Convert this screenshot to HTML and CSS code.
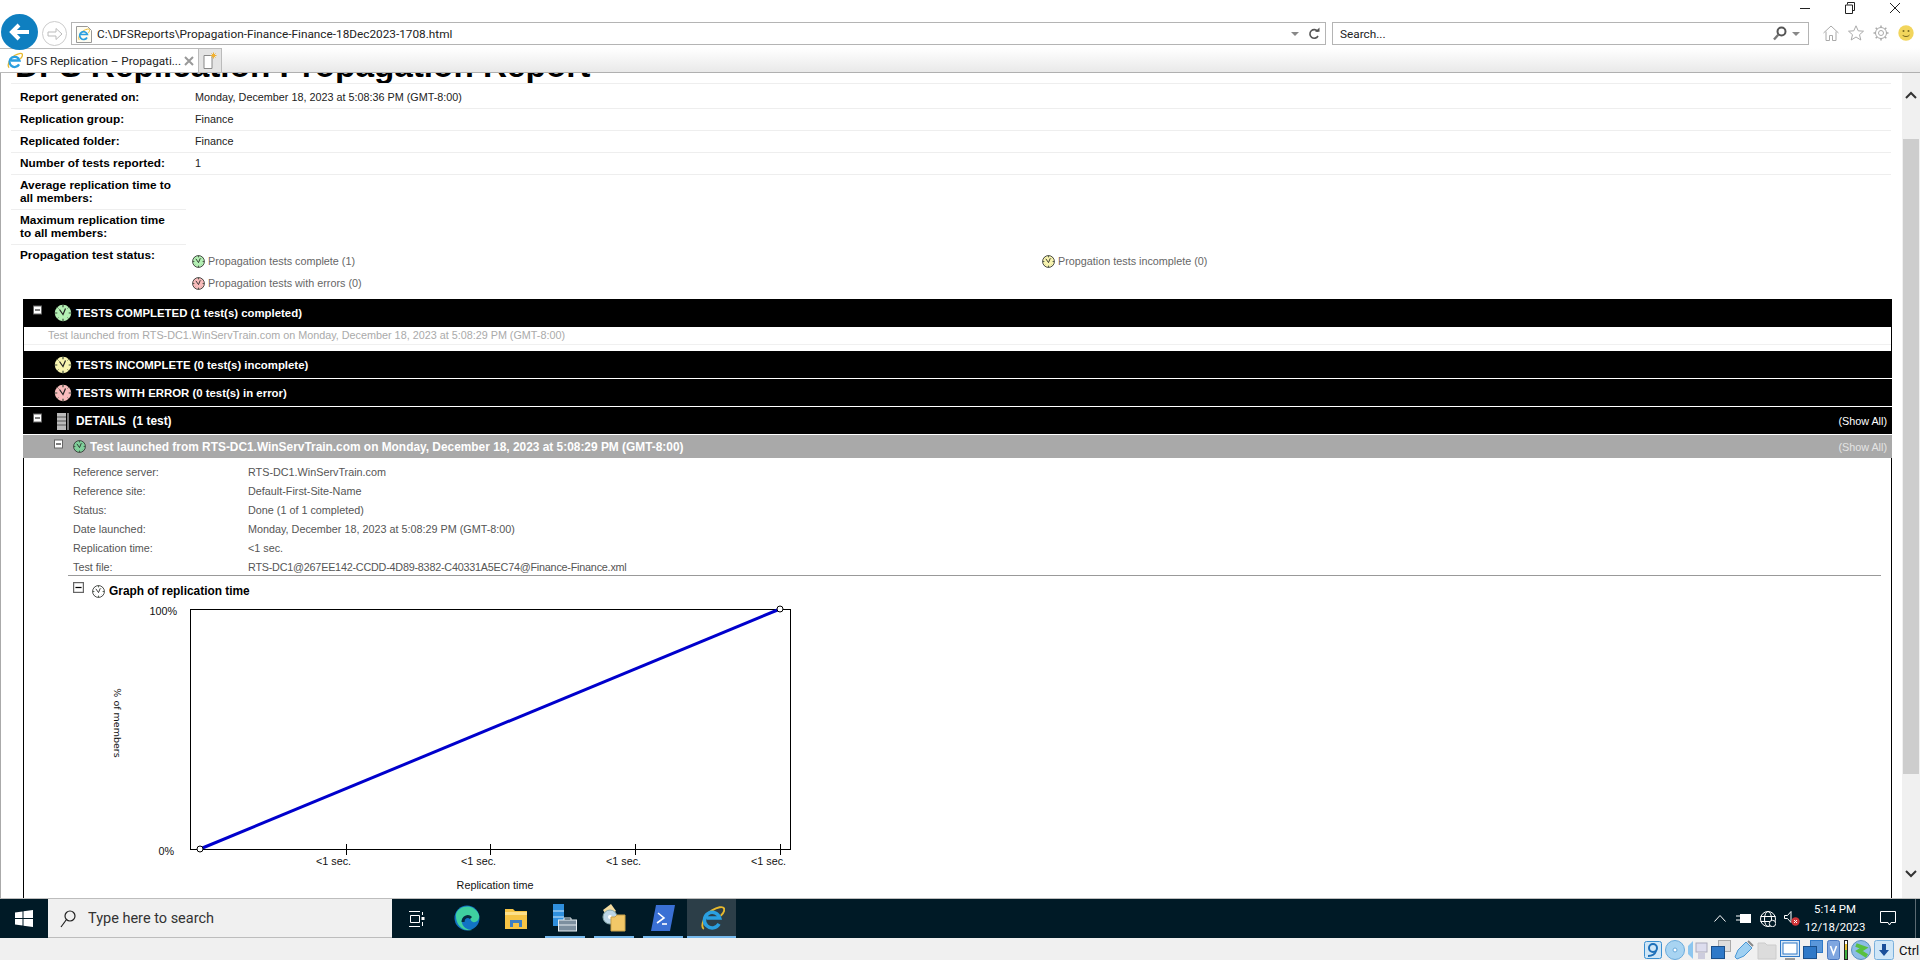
FILE: index.html
```html
<!DOCTYPE html>
<html lang="en">
<head>
    <meta charset="UTF-8">
    <title>DFS Replication - Propagation Report</title>
    <link rel="stylesheet" href="styles.css">
</head>
<body>
    <svg class="defs" aria-hidden="true">
        <symbol id="clock" viewBox="0 0 18 18">
            <circle class="face" cx="9" cy="9" r="8.200" fill="currentColor"/>
            <path d="M9 .8v2.500M9 14.700v2.500M.8 9h2.500M14.700 9h2.500" stroke="#3a4a3a" stroke-width="1.200"/>
            <path d="M3.200 3.200l1.300 1.300M14.800 3.200l-1.300 1.300M3.200 14.800l1.300-1.300M14.800 14.800l-1.300-1.300" stroke="#3a4a3a" stroke-width=".8"/>
            <path d="M5.500 5.500L9 10.500L11.500 4.500" fill="none" stroke="#222" stroke-width="1.200"/>
        </symbol>
        <symbol id="ie" viewBox="0 0 24 24">
            <path d="M4.500 22C1 20 5 9 12 5c5-3 10-4 11-2 1 2-1 5-3 7" fill="none" stroke="#e8b92e" stroke-width="1.800"/>
            <path d="M18.500 17.500a7.200 7.200 0 1 1 .6-5.500H7" fill="none" stroke="#2a9fe0" stroke-width="3.200"/>
        </symbol>
        <symbol id="minus-box" viewBox="0 0 9 9">
            <rect x=".5" y=".5" width="8" height="8" fill="#fff" stroke="#666"/>
            <path d="M2 4.500h5" stroke="#000"/>
        </symbol>
    </svg>

    <div class="titlebar">
        <svg class="win-btn" width="12" height="12" viewBox="0 0 12 12"><path d="M1 6.500h10" stroke="#222"/></svg>
        <svg class="win-btn" width="12" height="12" viewBox="0 0 12 12"><path d="M3.500 2.500V.5h7v8h-2M1.500 3h7v8.500h-7z" fill="none" stroke="#222"/></svg>
        <svg class="win-btn" width="12" height="12" viewBox="0 0 12 12"><path d="M1 1l10 10M11 1L1 11" stroke="#222"/></svg>
    </div>

    <div class="navbar">
        <div class="back-btn">
            <svg width="24" height="20" viewBox="0 0 24 20"><path d="M21 10H5M11 3l-7 7 7 7" fill="none" stroke="#fff" stroke-width="4"/></svg>
        </div>
        <div class="forward-btn">
            <svg width="16" height="14" viewBox="0 0 16 14"><path d="M1 5h8V1.500L15 7l-6 5.500V9H1z" fill="none" stroke="#bbb"/></svg>
        </div>
        <div class="address-box">
            <svg class="page-icon" width="16" height="18" viewBox="0 0 16 18">
                <path d="M.5 1.500h11l4 4v12H.5z" fill="#fffdf2" stroke="#999"/>
                <use href="#ie" x="1" y="3" width="13" height="13"/>
            </svg>
            <span class="address-text">C:\DFSReports\Propagation-Finance-Finance-18Dec2023-1708.html</span>
            <span class="drop-arrow"></span>
            <svg class="refresh" width="12" height="13" viewBox="0 0 12 13"><path d="M9.800 4.500A4.300 4.300 0 1 0 10 9" fill="none" stroke="#555" stroke-width="1.600"/><path d="M7 4.800h4.500V.5z" fill="#555"/></svg>
        </div>
        <div class="search-box">
            <span class="search-text">Search...</span>
            <svg class="search-icon" width="14" height="15" viewBox="0 0 14 15"><circle cx="8.500" cy="5.500" r="4" fill="none" stroke="#555" stroke-width="2"/><path d="M5.500 8.500L1 13.500" stroke="#777" stroke-width="2.400"/></svg>
            <span class="drop-arrow"></span>
        </div>
        <div class="tool-icons">
            <svg width="16" height="16" viewBox="0 0 16 16"><path d="M.5 8L8 1l7.500 7M3 6.500v9h3.500v-5h3v5H13v-9" fill="none" stroke="#aaa"/></svg>
            <svg width="16" height="16" viewBox="0 0 16 16"><path d="M8 .8l2.200 5 5.300.4-4 3.500 1.300 5.300L8 12l-4.800 3 1.300-5.300-4-3.500 5.300-.4z" fill="none" stroke="#aaa"/></svg>
            <svg width="16" height="16" viewBox="0 0 16 16"><circle cx="8" cy="8" r="2.500" fill="none" stroke="#aaa"/><circle cx="8" cy="8" r="5.500" fill="none" stroke="#aaa"/><path d="M8 .5v2.500M8 13v2.500M.5 8H3M13 8h2.500M2.700 2.700l1.500 1.500M11.800 11.800l1.500 1.500M2.700 13.300l1.500-1.500M11.800 4.200l1.500-1.500" stroke="#aaa" stroke-width="1.500"/></svg>
            <svg width="16" height="16" viewBox="0 0 16 16"><circle cx="8" cy="8" r="7.700" fill="#f2d55c"/><circle cx="5.500" cy="6" r="1" fill="#7a6a20"/><circle cx="10.500" cy="6" r="1" fill="#7a6a20"/><path d="M4.500 10c1.500 2 5.500 2 7 0" fill="none" stroke="#7a6a20"/></svg>
        </div>
    </div>

    <div class="tabstrip">
        <div class="tab">
            <svg width="17" height="17"><use href="#ie"/></svg>
            <span class="tab-title">DFS Replication – Propagati...</span>
            <svg width="10" height="10" viewBox="0 0 10 10"><path d="M1 1l8 8M9 1L1 9" stroke="#999" stroke-width="2"/></svg>
        </div>
        <div class="new-tab">
            <svg width="14" height="17" viewBox="0 0 14 17"><path d="M1 3.500h8v13H1z" fill="#fff" stroke="#888"/><path d="M10.500 .5v6M7.500 3.500h6M8.500 1.500l4 4M12.500 1.500l-4 4" stroke="#f0b030"/></svg>
        </div>
    </div>

    <div class="main">
        <div class="page">
            <h1>DFS Replication Propagation Report</h1>

            <table class="info">
                <tr class="first">
                    <th>Report generated on:</th>
                    <td class="ruled">Monday, December 18, 2023 at 5:08:36 PM (GMT-8:00)</td>
                </tr>
                <tr><th>Replication group:</th><td class="ruled">Finance</td></tr>
                <tr><th>Replicated folder:</th><td class="ruled">Finance</td></tr>
                <tr><th>Number of tests reported:</th><td class="ruled">1</td></tr>
                <tr><th>Average replication time to<br>all members:</th><td></td></tr>
                <tr><th>Maximum replication time<br>to all members:</th><td></td></tr>
                <tr class="last">
                    <th>Propagation test status:</th>
                    <td>
                        <div class="status-grid">
                            <div class="status"><svg class="clock-sm green"><use href="#clock"/></svg>Propagation tests complete (1)</div>
                            <div class="status"><svg class="clock-sm yellow"><use href="#clock"/></svg>Propgation tests incomplete (0)</div>
                            <div class="status"><svg class="clock-sm red"><use href="#clock"/></svg>Propagation tests with errors (0)</div>
                        </div>
                    </td>
                </tr>
            </table>

            <div class="report">
                <div class="bar bar-tall">
                    <svg class="toggle"><use href="#minus-box"/></svg>
                    <svg class="clock green"><use href="#clock"/></svg>
                    <span>TESTS COMPLETED (1 test(s) completed)</span>
                </div>
                <div class="test-list">
                    <div class="test-item">Test launched from RTS-DC1.WinServTrain.com on Monday, December 18, 2023 at 5:08:29 PM (GMT-8:00)</div>
                </div>
                <div class="bar">
                    <span class="toggle-gap"></span>
                    <svg class="clock yellow"><use href="#clock"/></svg>
                    <span>TESTS INCOMPLETE (0 test(s) incomplete)</span>
                </div>
                <div class="bar">
                    <span class="toggle-gap"></span>
                    <svg class="clock red"><use href="#clock"/></svg>
                    <span>TESTS WITH ERROR (0 test(s) in error)</span>
                </div>
                <div class="bar">
                    <svg class="toggle"><use href="#minus-box"/></svg>
                    <svg class="clock" viewBox="0 0 18 18"><path d="M3 1h9v17H3z" fill="#bbb"/><path d="M3 5h9M3 9h9M3 13h9" stroke="#555"/><path d="M13 1h2v17h-2z" fill="#777"/></svg>
                    <span class="details-title">DETAILS&nbsp; (1 test)</span>
                    <span class="show-all">(Show All)</span>
                </div>
                <div class="details">
                    <div class="bar-gray">
                        <svg class="toggle-sm"><use href="#minus-box"/></svg>
                        <svg class="clock-sm green-dark"><use href="#clock"/></svg>
                        <span>Test launched from RTS-DC1.WinServTrain.com on Monday, December 18, 2023 at 5:08:29 PM (GMT-8:00)</span>
                        <span class="show-all dim">(Show All)</span>
                    </div>
                    <div class="props">
                        <div class="prop"><span class="prop-name">Reference server:</span>RTS-DC1.WinServTrain.com</div>
                        <div class="prop"><span class="prop-name">Reference site:</span>Default-First-Site-Name</div>
                        <div class="prop"><span class="prop-name">Status:</span>Done (1 of 1 completed)</div>
                        <div class="prop"><span class="prop-name">Date launched:</span>Monday, December 18, 2023 at 5:08:29 PM (GMT-8:00)</div>
                        <div class="prop"><span class="prop-name">Replication time:</span>&lt;1 sec.</div>
                        <div class="prop"><span class="prop-name">Test file:</span><span class="tight">RTS-DC1@267EE142-CCDD-4D89-8382-C40331A5EC74@Finance-Finance.xml</span></div>
                    </div>
                    <div class="graph-head">
                        <svg class="toggle-graph"><use href="#minus-box"/></svg>
                        <svg class="clock-sm white"><use href="#clock"/></svg>
                        <span>Graph of replication time</span>
                    </div>
                    <svg class="chart" width="720" height="298" viewBox="0 0 720 298">
                        <rect x="90.500" y="9.500" width="600" height="240" fill="#fff" stroke="#000"/>
                        <path d="M246.500 244v11M390.500 244v11M535.500 244v11M680.500 244v11" stroke="#000"/>
                        <path d="M100 249L680 9" stroke="#0000cc" stroke-width="3"/>
                        <circle cx="100" cy="249" r="3" fill="#fff" stroke="#000"/>
                        <circle cx="680" cy="9" r="3" fill="#fff" stroke="#000"/>
                        <text class="axis" x="77" y="15" text-anchor="end">100%</text>
                        <text class="axis" x="74" y="255" text-anchor="end">0%</text>
                        <text class="axis" x="233.500" y="265" text-anchor="middle">&lt;1 sec.</text>
                        <text class="axis" x="378.500" y="265" text-anchor="middle">&lt;1 sec.</text>
                        <text class="axis" x="523.500" y="265" text-anchor="middle">&lt;1 sec.</text>
                        <text class="axis" x="668.500" y="265" text-anchor="middle">&lt;1 sec.</text>
                        <text class="axis" x="395" y="289" text-anchor="middle">Replication time</text>
                        <text class="axis-v" transform="translate(14 123) rotate(90)" text-anchor="middle">% of members</text>
                    </svg>
                </div>
            </div>
        </div>

        <div class="scrollbar">
            <div class="scroll-btn"><svg width="12" height="8" viewBox="0 0 12 8"><path d="M1 7l5-5 5 5" fill="none" stroke="#333" stroke-width="2"/></svg></div>
            <div class="scroll-thumb"></div>
            <div class="scroll-track"></div>
            <div class="scroll-btn-end"><svg width="12" height="8" viewBox="0 0 12 8"><path d="M1 1l5 5 5-5" fill="none" stroke="#333" stroke-width="2"/></svg></div>
        </div>
    </div>

    <div class="taskbar">
        <div class="start">
            <svg width="18" height="17" viewBox="0 0 18 17"><path d="M0 2.500l7.500-1.100v6.600H0zM8.500 1.200L18 0v8H8.500zM0 9h7.500v6.600L0 14.500zM8.500 9H18v8l-9.500-1.200z" fill="#fff"/></svg>
        </div>
        <div class="task-search">
            <svg width="16" height="18" viewBox="0 0 16 18"><circle cx="10" cy="6" r="5" fill="none" stroke="#222" stroke-width="1.200"/><path d="M6.500 9.500L1 17" stroke="#222" stroke-width="1.200"/></svg>
            <span>Type here to search</span>
        </div>
        <div class="task-view">
            <svg width="16" height="16" viewBox="0 0 16 16"><path d="M0 .5h11M0 15.500h11M1.500 4.500h9v7h-9zM13.500 1v3M13.500 11v4" fill="none" stroke="#fff"/><rect x="12.500" y="6" width="3" height="3" fill="#fff"/></svg>
        </div>
        <div class="task-item">
            <svg width="26" height="26" viewBox="0 0 26 26">
                <circle cx="13" cy="13" r="12.500" fill="#1273c4"/>
                <path d="M2 9C5 0 20-2 25 10c1 5-3 8-6 7-3-1-2-4-4-5-4-2-8 1-7 6 1 4 5 7 10 7-9 2-17-5-16-16z" fill="#3fd0a0"/>
                <path d="M9 17c0-5 5-7 8-4" fill="none" stroke="#062a40" stroke-width="3"/>
            </svg>
        </div>
        <div class="task-item">
            <svg width="22" height="22" viewBox="0 0 22 22"><path d="M0 2h8l2 2h12v18H0z" fill="#f6c445"/><path d="M0 5h22v3H0z" fill="#fde08a"/><path d="M5 20v-7h12v7h-3v-4H8v4z" fill="#3d7fc4"/></svg>
        </div>
        <div class="task-item running">
            <svg width="24" height="28" viewBox="0 0 24 28"><path d="M0 0h11v22H0z" fill="#2f8fdc"/><path d="M0 7h11M0 13h11" stroke="#cfe8fb"/><rect x="5.500" y="16" width="18" height="11" fill="#7c8f9f" stroke="#e6edf2"/><path d="M11 16v-2h7v2M6 21h17" fill="none" stroke="#e6edf2"/></svg>
        </div>
        <div class="task-item running">
            <svg width="25" height="28" viewBox="0 0 25 28"><path d="M2 6l8-6 5 7-8 7z" fill="#f4dca0"/><circle cx="9" cy="13" r="7" fill="#bcd6e6" stroke="#8aa"/><circle cx="9" cy="13" r="2" fill="#fff"/><path d="M10 13h4l2-2h8v16H10z" fill="#f2c868" stroke="#c9a24a"/></svg>
        </div>
        <div class="task-item running">
            <svg width="24" height="26" viewBox="0 0 24 26"><path d="M5 0h19l-5 26H0z" fill="#3a70d4"/><path d="M7 8l6 5-7 5" fill="none" stroke="#fff" stroke-width="1.600"/><path d="M11 19h5" stroke="#fff" stroke-width="1.600"/></svg>
        </div>
        <div class="task-item running active">
            <svg width="26" height="26"><use href="#ie"/></svg>
        </div>
        <div class="tray">
            <svg width="12" height="7" viewBox="0 0 12 7"><path d="M.5 6.500l5.500-6 5.500 6" fill="none" stroke="#fff"/></svg>
            <svg width="16" height="11" viewBox="0 0 16 11"><rect x="4.500" y="1.500" width="10" height="8" fill="#fff" stroke="#fff"/><path d="M0 3h4M0 7h4" stroke="#fff"/></svg>
            <svg width="16" height="16" viewBox="0 0 16 16"><circle cx="8" cy="8" r="7.500" fill="none" stroke="#fff"/><ellipse cx="8" cy="8" rx="3.500" ry="7.500" fill="none" stroke="#fff"/><path d="M.5 5.500h15M.5 10.500h15" stroke="#fff"/><circle cx="12.500" cy="12.500" r="3.200" fill="#001a26" stroke="#fff"/></svg>
            <svg width="16" height="15" viewBox="0 0 16 15"><path d="M.5 4.500h3l3.500-4v11l-3.500-4h-3z" fill="none" stroke="#fff"/><circle cx="11.500" cy="10.500" r="4.200" fill="#d13438"/><path d="M10 9l3 3M13 9l-3 3" stroke="#fff"/></svg>
            <div class="clock-text"><span>5:14 PM</span><span>12/18/2023</span></div>
            <svg class="notify" width="16" height="15" viewBox="0 0 16 15"><path d="M.5.500h15v11h-4.500l-1.500 2.500-1.500-2.500H.5z" fill="none" stroke="#fff"/></svg>
            <div class="show-desktop"></div>
        </div>
    </div>

    <div class="vbox-bar">
        <svg width="18" height="18" viewBox="0 0 18 18"><rect x=".5" y=".5" width="17" height="17" rx="2" fill="#cfe6f7" stroke="#3a8fd0"/><circle cx="9" cy="7" r="4" fill="none" stroke="#1d6fb8" stroke-width="2"/><path d="M4 15c4 0 7-2 8-5" fill="none" stroke="#1d6fb8" stroke-width="2"/></svg>
        <svg width="20" height="20" viewBox="0 0 20 20"><circle cx="10" cy="10" r="9.500" fill="#a8d4f2" stroke="#6aaadb"/><circle cx="10" cy="10" r="2" fill="#fff" stroke="#6aaadb"/></svg>
        <svg width="20" height="20" viewBox="0 0 20 20"><path d="M0 6l5-5v18l-5-5z" fill="#8cc6ef"/><rect x="8" y="3" width="11" height="9" fill="#dde" stroke="#aab"/><rect x="10" y="13" width="7" height="6" fill="#ccd"/></svg>
        <svg width="20" height="20" viewBox="0 0 20 20"><rect x="7.500" y=".5" width="12" height="11" fill="#ddd" stroke="#aaa"/><rect x=".5" y="6.500" width="13" height="12" fill="#2f79c8" stroke="#1a4f8a"/></svg>
        <svg width="20" height="20" viewBox="0 0 20 20"><path d="M1 17l3-7 8-8 6 6-8 8-7 3z" fill="#9ed0f2" stroke="#4a97d4"/><path d="M14 1l5 5" stroke="#888" stroke-width="2"/></svg>
        <svg width="20" height="20" viewBox="0 0 20 20"><path d="M1 3h7l2 2h9v14H1z" fill="#dcdcdc" stroke="#ccc"/></svg>
        <svg width="20" height="20" viewBox="0 0 20 20"><rect x=".5" y=".5" width="19" height="16" fill="#dbe9f6" stroke="#2f79c8"/><rect x="3" y="3" width="14" height="11" fill="#fff" stroke="#2f79c8"/><path d="M5 19h10" stroke="#999" stroke-width="2"/></svg>
        <svg width="20" height="20" viewBox="0 0 20 20"><rect x="7.500" y=".5" width="12" height="12" fill="#5a97da" stroke="#2f79c8"/><rect x=".5" y="6.500" width="13" height="12" fill="#2f79c8" stroke="#1a4f8a"/></svg>
        <svg class="chip" width="15" height="20" viewBox="0 0 15 20"><rect x="1.500" y=".5" width="12" height="19" rx="2" fill="#7fa6e0" stroke="#4a78c0"/><path d="M4.500 6l3 8 3-8" fill="none" stroke="#fff" stroke-width="1.600"/></svg>
        <svg class="meter" width="4" height="20" viewBox="0 0 4 20"><rect x=".5" y=".5" width="3" height="19" fill="#fff" stroke="#222"/><path d="M2 4v6" stroke="#e8c030" stroke-width="2"/><path d="M2 10v9" stroke="#40b040" stroke-width="2"/></svg>
        <svg width="20" height="20" viewBox="0 0 20 20"><circle cx="10" cy="10" r="9.500" fill="#8dbde6" stroke="#5a8fc0"/><path d="M5 5l8 3-5 3 8 5" fill="none" stroke="#58c040" stroke-width="4"/></svg>
        <svg width="20" height="20" viewBox="0 0 20 20"><rect x=".5" y=".5" width="19" height="19" rx="2" fill="#cfe6f7" stroke="#7ab0dc"/><path d="M8 4h4v6h3l-5 6-5-6h3z" fill="#1a4f9a"/></svg>
        <span class="ctrl">Ctrl</span>
    </div>
</body>
</html>
```

FILE: styles.css
```css
* {
    box-sizing: border-box;
}
html, body {
    margin: 0;
    height: 100%;
}
body {
    width: 1920px;
    height: 960px;
    overflow: hidden;
    display: flex;
    flex-direction: column;
    background: #fff;
    font-family: Roboto, "Noto Sans", sans-serif;
}
.defs {
    position: absolute;
    width: 0;
    height: 0;
}

/* window chrome */
.titlebar {
    height: 20px;
    display: flex;
    justify-content: flex-end;
    align-items: flex-start;
    gap: 33px;
    padding: 2px 19px 0 0;
}
.navbar {
    height: 28px;
    display: flex;
    align-items: flex-start;
    padding: 2px 0 0 1px;
}
.back-btn {
    width: 37px;
    height: 36px;
    margin-top: -8px;
    border-radius: 50%;
    background: #0f7fc0;
    display: flex;
    align-items: center;
    justify-content: center;
    position: relative;
}
.forward-btn {
    width: 25px;
    height: 25px;
    margin: -1px 0 0 4px;
    border: 1px solid #ccc;
    border-radius: 50%;
    display: flex;
    align-items: center;
    justify-content: center;
}
.address-box, .search-box {
    height: 23px;
    border: 1px solid #b4b4b4;
    display: flex;
    align-items: center;
    font-size: 11.800px;
    color: #222;
    background: #fff;
}
.address-box {
    width: 1255px;
    margin-left: 4px;
    padding: 0 5px 0 4px;
}
.address-text {
    margin-left: 5px;
    flex: 1;
}
.drop-arrow {
    width: 0;
    height: 0;
    border: 4px solid transparent;
    border-top: 4px solid #888;
    border-bottom: 0;
}
.refresh {
    margin-left: 9px;
}
.search-box {
    width: 477px;
    margin-left: 6px;
    padding: 0 8px 0 7px;
}
.search-text {
    flex: 1;
}
.search-icon {
    margin-right: 5px;
}
.tool-icons {
    display: flex;
    gap: 9px;
    margin-left: 14px;
    margin-top: 3px;
}
.tabstrip {
    height: 25px;
    display: flex;
    border-bottom: 1px solid #b0b0b0;
    background: linear-gradient(#fff, #e9e9e9);
}
.tab {
    width: 199px;
    height: 25px;
    display: flex;
    align-items: center;
    padding: 0 4px 0 6px;
    background: #fff;
    border: 1px solid #bbb;
    border-left: 0;
    font-size: 11.700px;
    color: #222;
}
.tab-title {
    margin-left: 3px;
    flex: 1;
    white-space: nowrap;
}
.new-tab {
    width: 23px;
    height: 25px;
    background: #e4e4e4;
    border: 1px solid #bbb;
    border-left: 0;
    display: flex;
    align-items: center;
    justify-content: center;
}

/* report */
.main {
    flex: 1;
    min-height: 0;
    display: flex;
}
.page {
    width: 1902px;
    overflow: hidden;
    border-left: 1px solid #aaa;
    font-family: "Liberation Sans", Arial, sans-serif;
    font-size: 10.800px;
}
h1 {
    margin: -25px 0 -1px 14px;
    font-size: 33.300px;
    line-height: 36px;
    color: #000;
    white-space: nowrap;
}
.info {
    width: 1880px;
    margin-left: 10px;
    border-collapse: collapse;
    table-layout: fixed;
    line-height: 13px;
    position: relative;
}
.info th {
    width: 175px;
    padding: 4px 0 4px 9px;
    text-align: left;
    vertical-align: top;
    color: #000;
    font-size: 11.800px;
    font-weight: bold;
    border-bottom: 1px solid #eee;
}
.info td {
    padding: 4px 0 4px 9px;
    vertical-align: top;
    color: #222;
}
.info td.ruled {
    border-bottom: 1px solid #eee;
}
.info .first th, .info .first td {
    border-top: 1px solid #eee;
    padding-top: 7px;
}
.info .last th {
    border-bottom: 0;
}
.info .last td {
    padding: 6px 0 0 6px;
}
.status-grid {
    display: grid;
    grid-template-columns: 850px 1fr;
}
.status {
    height: 22px;
    display: flex;
    align-items: center;
    gap: 3px;
    color: #666;
}
.clock-sm {
    width: 13px;
    height: 13px;
    --ring: #333;
}
.face {
    stroke: var(--ring, none);
    stroke-width: 1.200;
}
.green { color: #b4f0b4; }
.yellow { color: #f8f4b0; }
.red { color: #f8bcbc; }
.green-dark { color: #7fd09a; }
.white { color: #fff; }

.report {
    width: 1869px;
    margin: 4px 0 0 22px;
}
.bar {
    height: 27px;
    margin-bottom: 1px;
    background: #000;
    color: #fff;
    font-size: 11.400px;
    font-weight: bold;
    display: flex;
    align-items: center;
    padding: 1px 0 0 10px;
}
.bar-tall {
    height: 28px;
    margin-bottom: 0;
}
.details-title {
    font-size: 11.900px;
}
.toggle {
    width: 9px;
    height: 10px;
    margin-right: 12px;
    margin-top: -6px;
}
.toggle-gap {
    width: 21px;
}
.clock {
    width: 18px;
    height: 18px;
    margin-right: 4px;
}
.show-all {
    margin-left: auto;
    margin-right: 5px;
    font-size: 10.800px;
    font-weight: normal;
}
.show-all.dim {
    color: #e4e4e4;
}
.test-list {
    height: 24px;
    border-left: 1px solid #000;
    border-right: 1px solid #000;
}
.test-item {
    height: 18px;
    padding: 2px 0 0 24px;
    color: #aaa;
    border-bottom: 1px solid #f0f0f0;
    line-height: 13px;
}
.details {
    height: 463px;
    border-left: 1px solid #000;
    border-right: 1px solid #000;
}
.bar-gray {
    height: 23px;
    margin: 0 -1px;
    background: #a9a9a9;
    color: #fff;
    font-size: 11.900px;
    font-weight: bold;
    display: flex;
    align-items: center;
    padding: 1px 0 0 31px;
}
.toggle-sm {
    width: 9px;
    height: 10px;
    margin-top: -6px;
    margin-right: 10px;
}
.bar-gray .clock-sm {
    margin-right: 4px;
}
.props {
    margin: 5px 10px 0 44px;
    padding-left: 5px;
    border-bottom: 1px solid #999;
    color: #555;
}
.prop {
    height: 19px;
    line-height: 19px;
}
.prop:last-child {
    height: 17px;
}
.prop-name {
    display: inline-block;
    width: 175px;
}
.tight {
    letter-spacing: -0.22px;
}
.graph-head {
    height: 24px;
    display: flex;
    align-items: center;
    margin-left: 49px;
    padding-top: 7px;
    font-size: 11.900px;
    font-weight: bold;
    color: #000;
}
.toggle-graph {
    width: 11px;
    height: 11px;
    margin-right: 8px;
    margin-top: -7px;
}
.graph-head .clock-sm {
    margin-right: 4px;
}
.chart {
    display: block;
    margin-left: 76px;
}
.axis {
    font-family: "Liberation Sans", Arial, sans-serif;
    font-size: 10.800px;
    fill: #111;
}
.axis-v {
    font-family: "DejaVu Sans", sans-serif;
    font-size: 9.500px;
    fill: #111;
}

/* scrollbar */
.scrollbar {
    width: 18px;
    display: flex;
    flex-direction: column;
    background: #f0f0f0;
}
.scroll-btn {
    height: 66px;
    display: flex;
    justify-content: center;
    padding-top: 18px;
}
.scroll-thumb {
    height: 635px;
    margin: 0 1px;
    background: #cdcdcd;
}
.scroll-track {
    flex: 1;
}
.scroll-btn-end {
    height: 30px;
    display: flex;
    justify-content: center;
    padding-top: 2px;
}

/* windows taskbar */
.taskbar {
    height: 40px;
    flex: none;
    display: flex;
    background: #001a26;
    border-top: 1px solid #bdbdbd;
    color: #fff;
}
.start {
    width: 48px;
    display: flex;
    align-items: center;
    justify-content: center;
}
.task-search {
    width: 344px;
    display: flex;
    align-items: center;
    gap: 12px;
    padding: 1px 0 0 12px;
    background: #f0f0f0;
    border-bottom: 1px solid #bdbdbd;
    color: #333;
    font-size: 14.500px;
}
.task-view {
    width: 50px;
    display: flex;
    align-items: center;
    justify-content: center;
}
.task-item {
    width: 49px;
    display: flex;
    align-items: center;
    justify-content: center;
    position: relative;
    padding-bottom: 2px;
}
.task-item.running::after {
    content: "";
    position: absolute;
    left: 5px;
    right: 4px;
    bottom: 0;
    height: 2px;
    background: #76b9ed;
}
.task-item.active {
    background: #2c3e48;
}
.task-item.active::after {
    left: 0;
    right: 0;
}
.tray {
    margin-left: auto;
    display: flex;
    align-items: center;
    height: 100%;
}
.tray > svg:nth-child(1) { margin-right: 10px; }
.tray > svg:nth-child(2) { margin-right: 8px; }
.tray > svg:nth-child(3) { margin-right: 8px; }
.clock-text {
    width: 70px;
    display: flex;
    flex-direction: column;
    align-items: center;
    gap: 3px;
    font-size: 11.400px;
    line-height: 15px;
}
.notify {
    margin-left: 10px;
    margin-right: 19px;
}
.show-desktop {
    width: 1px;
    height: 100%;
    background: #5a6a72;
    margin-right: 4px;
}

/* virtualbox status bar */
.vbox-bar {
    height: 22px;
    flex: none;
    display: flex;
    align-items: center;
    justify-content: flex-end;
    gap: 3px;
    background: #f0f0f0;
    padding-top: 2px;
}
.ctrl {
    font-size: 13px;
    color: #111;
    width: 21px;
    overflow: hidden;
    margin-left: 2px;
}
```
